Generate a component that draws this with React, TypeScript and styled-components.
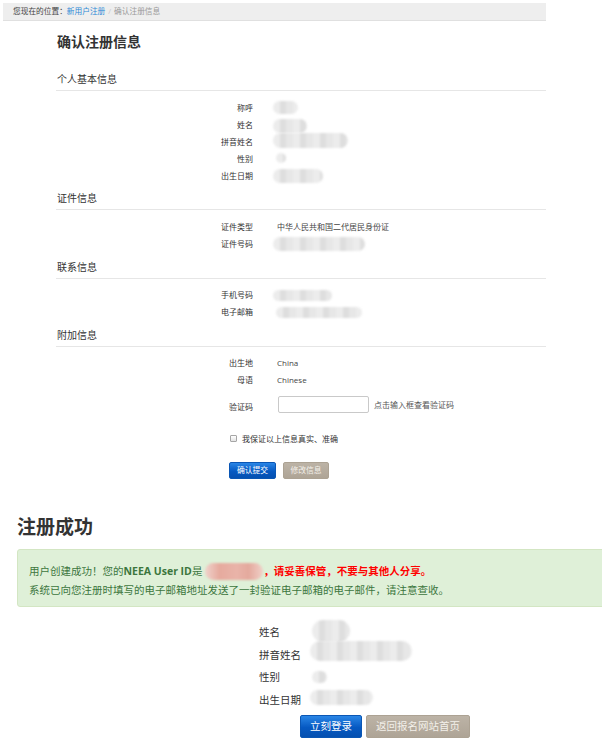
import React from "react";
import styled, { createGlobalStyle } from "styled-components";

const Global = createGlobalStyle`
  html, body { margin: 0; padding: 0; background: #fff; overflow: hidden; }
  body { font-family: "Open Sans", "Noto Sans CJK SC", sans-serif; color: #333; }
  * { box-sizing: border-box; }
`;

const Page = styled.div`
  width: 602px;
`;

const Crumbs = styled.nav`
  margin: 3px 0 0 3px;
  width: 543px;
  height: 18px;
  padding-left: 10px;
  background: #eeeeee;
  border-bottom: 1px solid #e0e0e0;
  font-size: 7.7px;
  line-height: 17px;
  color: #444;
  white-space: nowrap;
`;
const CrumbLink = styled.a`
  color: #2d8ad6;
  text-decoration: none;
`;
const CrumbSep = styled.span`
  color: #c8c8c8;
  padding: 0 3px;
`;
const CrumbActive = styled.span`
  color: #9a9a9a;
`;

const Confirm = styled.section`
  margin-left: 56px;
  width: 490px;
`;
const Title = styled.h1`
  margin: 11px 0 20px 1px;
  font-size: 14px;
  line-height: 20px;
  font-weight: bold;
  color: #333;
`;
const SectionHead = styled.h3`
  margin: 7px 0 0;
  padding: 0 0 4px 1px;
  font-size: 10px;
  line-height: 14px;
  font-weight: normal;
  color: #333333;
  border-bottom: 1px solid #e6e6e6;
`;
const Fields = styled.dl`
  margin: 0;
  padding-top: 8px;
  display: grid;
  grid-template-columns: 197px 1fr;
  column-gap: 24px;
  grid-auto-rows: 17.1px;
  align-items: center;
  font-size: 8px;
  line-height: 12px;
`;
const Label = styled.dt<{ $left?: boolean }>`
  margin: 0;
  text-align: ${(p) => (p.$left ? "left" : "right")};
  color: #333;
  white-space: nowrap;
`;
const Value = styled.dd`
  margin: 0;
  color: #444;
  display: flex;
  align-items: center;
  white-space: nowrap;
`;

const CaptchaRow = styled.div`
  margin-top: 7px;
  height: 17px;
  display: grid;
  grid-template-columns: 197px auto auto 1fr;
  align-items: center;
  font-size: 8px;
  line-height: 12px;
`;
const CaptchaLabel = styled.label`
  text-align: right;
  padding-top: 5px;
  color: #333;
`;
const CaptchaInput = styled.input`
  margin-left: 25px;
  width: 91px;
  height: 17px;
  border: 1px solid #c9c9c9;
  border-radius: 2px;
  background: #fff;
  padding: 0 4px;
  font-size: 8px;
`;
const Hint = styled.span`
  margin-left: 5px;
  color: #555;
  white-space: nowrap;
`;

const Agree = styled.label`
  margin: 19px 0 0 174px;
  height: 12px;
  display: flex;
  align-items: center;
  gap: 5px;
  font-size: 8px;
  color: #333;
`;
const Check = styled.input`
  appearance: none;
  margin: 0;
  width: 7px;
  height: 7px;
  border: 1px solid #a6a6a6;
  border-radius: 1px;
  background: linear-gradient(#fff, #e4e4e4);
`;

const Actions = styled.div<{ $left: number; $top: number; $gap: number }>`
  display: flex;
  gap: ${(p) => p.$gap}px;
  margin-top: ${(p) => p.$top}px;
  margin-left: ${(p) => p.$left}px;
`;

const Btn = styled.button<{ $muted?: boolean; $w: number; $h: number; $fs: number }>`
  width: ${(p) => p.$w}px;
  height: ${(p) => p.$h}px;
  padding: 0;
  border-radius: 2px;
  font-family: inherit;
  font-size: ${(p) => p.$fs}px;
  line-height: 1;
  cursor: pointer;
  border: 1px solid ${(p) => (p.$muted ? "#aca293" : "#0a56b4")};
  color: ${(p) => (p.$muted ? "#f3f0ea" : "#fff")};
  background: ${(p) =>
    p.$muted
      ? "linear-gradient(#bcb3a6, #aea496)"
      : "linear-gradient(#2a86e6, #0659c2 55%, #0550b0)"};
`;

const Blur = styled.span<{ $w: number; $h: number; $dx?: number; $dy?: number; $red?: boolean }>`
  display: inline-block;
  flex: none;
  vertical-align: middle;
  width: ${(p) => p.$w}px;
  height: ${(p) => p.$h}px;
  border-radius: ${(p) => p.$h / 2}px;
  margin-left: ${(p) => p.$dx ?? -4}px;
  transform: translateY(${(p) => p.$dy ?? 0}px);
  background: ${(p) =>
    p.$red
      ? "linear-gradient(90deg, #f0d3cc, #e6aa9e 25%, #e9b4a9 55%, #e4a99d 75%, #f0d0c8)"
      : "repeating-linear-gradient(90deg, #ececec 0 7px, #dedede 7px 13px, #e7e7e7 13px 20px)"};
  filter: blur(1.2px);
`;

const Success = styled.section`
  margin: 35px 0 0 17px;
`;
const SuccessTitle = styled.h2`
  margin: 0;
  font-size: 19px;
  line-height: 26px;
  font-weight: bold;
  color: #333;
`;
const Alert = styled.div`
  margin-top: 9px;
  width: 600px;
  height: 58px;
  padding: 13px 11px 0;
  border: 1px solid #d3e6c3;
  border-radius: 3px;
  background: #dff0d8;
  color: #3c763d;
  font-size: 10.5px;
  line-height: 15px;
  white-space: nowrap;
`;
const AlertLine = styled.p`
  margin: 0 0 3px;
  display: flex;
  align-items: center;
`;
const Warn = styled.strong`
  color: #f00;
  font-weight: bold;
`;

const Summary = styled.dl`
  margin: 14px 0 0 242px;
  display: grid;
  grid-template-columns: 53px 1fr;
  grid-auto-rows: 22.5px;
  align-items: center;
  font-size: 10.5px;
  line-height: 14px;
`;

export default function App() {
  return (
    <Page>
      <Global />
      <Crumbs>
        您现在的位置：<CrumbLink href="#">新用户注册</CrumbLink>
        <CrumbSep>/</CrumbSep>
        <CrumbActive>确认注册信息</CrumbActive>
      </Crumbs>

      <Confirm>
        <Title>确认注册信息</Title>

        <SectionHead>个人基本信息</SectionHead>
        <Fields>
          <Label>称呼</Label>
          <Value><Blur $w={25} $h={13} /></Value>
          <Label>姓名</Label>
          <Value><Blur $w={34} $h={14} $dy={1} /></Value>
          <Label>拼音姓名</Label>
          <Value><Blur $w={75} $h={15} $dy={-1} /></Value>
          <Label>性别</Label>
          <Value><Blur $w={10} $h={10} $dx={-1} $dy={-1} /></Value>
          <Label>出生日期</Label>
          <Value><Blur $w={50} $h={14} /></Value>
        </Fields>

        <SectionHead>证件信息</SectionHead>
        <Fields>
          <Label>证件类型</Label>
          <Value>中华人民共和国二代居民身份证</Value>
          <Label>证件号码</Label>
          <Value><Blur $w={92} $h={14} /></Value>
        </Fields>

        <SectionHead>联系信息</SectionHead>
        <Fields>
          <Label>手机号码</Label>
          <Value><Blur $w={59} $h={11} /></Value>
          <Label>电子邮箱</Label>
          <Value><Blur $w={86} $h={11} $dx={-1} /></Value>
        </Fields>

        <SectionHead>附加信息</SectionHead>
        <Fields>
          <Label>出生地</Label>
          <Value>China</Value>
          <Label>母语</Label>
          <Value>Chinese</Value>
        </Fields>

        <CaptchaRow>
          <CaptchaLabel htmlFor="captcha">验证码</CaptchaLabel>
          <CaptchaInput id="captcha" type="text" />
          <Hint>点击输入框查看验证码</Hint>
        </CaptchaRow>

        <Agree>
          <Check type="checkbox" />
          我保证以上信息真实、准确
        </Agree>

        <Actions $left={173} $top={18} $gap={7}>
          <Btn $w={47} $h={17} $fs={7.8}>确认提交</Btn>
          <Btn $muted $w={46} $h={17} $fs={7.8}>修改信息</Btn>
        </Actions>
      </Confirm>

      <Success>
        <SuccessTitle>注册成功</SuccessTitle>
        <Alert>
          <AlertLine>
            用户创建成功！您的<strong>NEEA User ID</strong>是
            <Blur $red $w={58} $h={17} $dx={3} />
            <Warn>，请妥善保管，不要与其他人分享。</Warn>
          </AlertLine>
          <AlertLine>系统已向您注册时填写的电子邮箱地址发送了一封验证电子邮箱的电子邮件，请注意查收。</AlertLine>
        </Alert>

        <Summary>
          <Label $left>姓名</Label>
          <Value><Blur $w={38} $h={22} $dx={0} $dy={-1} /></Value>
          <Label $left>拼音姓名</Label>
          <Value><Blur $w={102} $h={20} $dx={-2} $dy={-4} /></Value>
          <Label $left>性别</Label>
          <Value><Blur $w={15} $h={12} $dx={0} /></Value>
          <Label $left>出生日期</Label>
          <Value><Blur $w={63} $h={15} $dx={-2} $dy={-2} /></Value>
        </Summary>

        <Actions $left={283} $top={4} $gap={4}>
          <Btn $w={62} $h={23} $fs={10.5}>立刻登录</Btn>
          <Btn $muted $w={104} $h={23} $fs={10.5}>返回报名网站首页</Btn>
        </Actions>
      </Success>
    </Page>
  );
}
